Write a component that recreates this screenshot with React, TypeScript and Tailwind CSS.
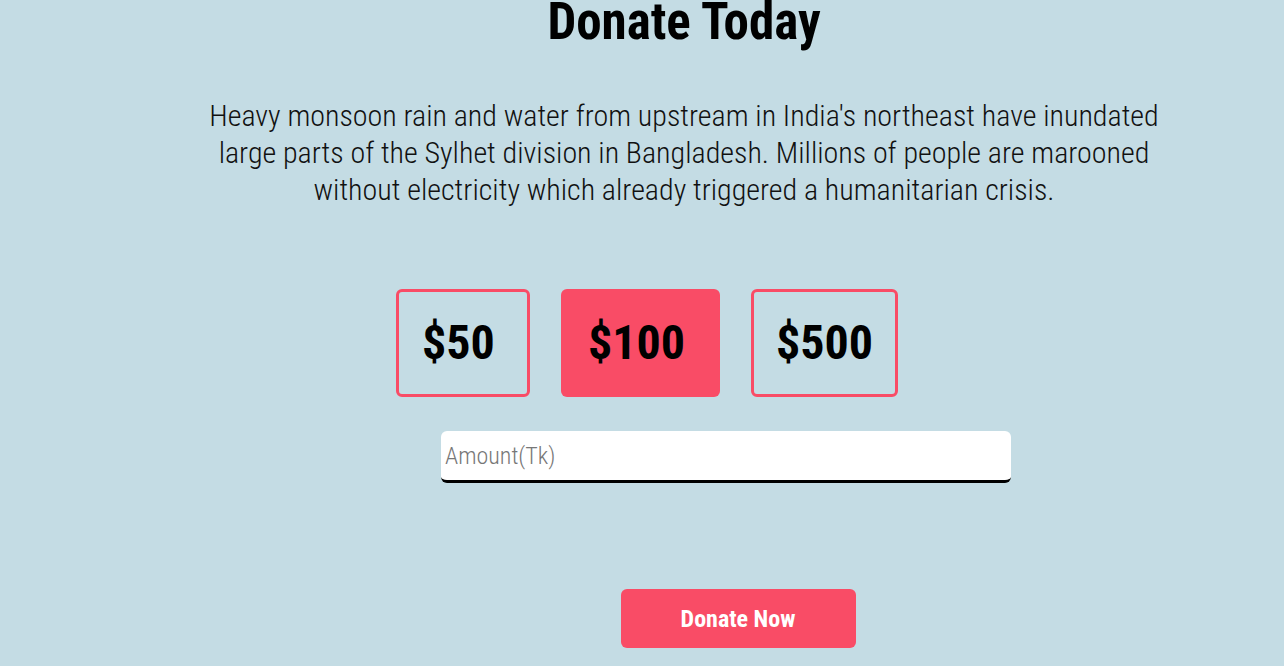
export default function App() {
  const amounts = [
    { label: "$50", cls: "w-[134px] justify-start pl-[23px]", active: false },
    { label: "$100", cls: "w-[159px] justify-start pl-[27px]", active: true },
    { label: "$500", cls: "w-[147px] justify-center", active: false },
  ];
  return (
    <div
      className="min-h-[666px] w-full overflow-hidden bg-[#c4dce4] text-black"
      style={{ fontFamily: '"Roboto Condensed", Roboto, "Liberation Sans Narrow", sans-serif', fontStretch: "condensed" }}
    >
      <h1 className="-mt-[11px] text-center text-[51px] font-bold leading-[66px] pl-[84px]">Donate Today</h1>
      <p className="mx-auto mt-[42px] w-[1044px] pl-[84px] text-center text-[30px] font-light leading-[37px] text-[#111]">
        Heavy monsoon rain and water from upstream in India's northeast have inundated large parts of the Sylhet division in Bangladesh. Millions of people are marooned without electricity which already triggered a humanitarian crisis.
      </p>
      <div className="mt-[81px] flex justify-center gap-[31px] pl-[10px]">
        {amounts.map((a) => (
          <button
            key={a.label}
            className={`${a.cls} flex h-[108px] items-center rounded-[6px] text-[48px] font-bold ${
              a.active ? "bg-[#f94c66]" : "border-[3px] border-[#f94c66]"
            }`}
          >
            {a.label}
          </button>
        ))}
      </div>
      <div className="mt-[34px] flex justify-center pl-[168px]">
        <input
          placeholder="Amount(Tk)"
          className="h-[52px] w-[570px] rounded-[6px] border-b-[3px] border-black bg-white px-[4px] text-[24px] font-light outline-none placeholder:text-[#777]"
        />
      </div>
      <div className="mt-[106px] flex justify-center pl-[192px]">
        <button className="h-[59px] w-[235px] rounded-[6px] bg-[#f94c66] text-[24px] font-bold text-white">Donate Now</button>
      </div>
    </div>
  );
}
